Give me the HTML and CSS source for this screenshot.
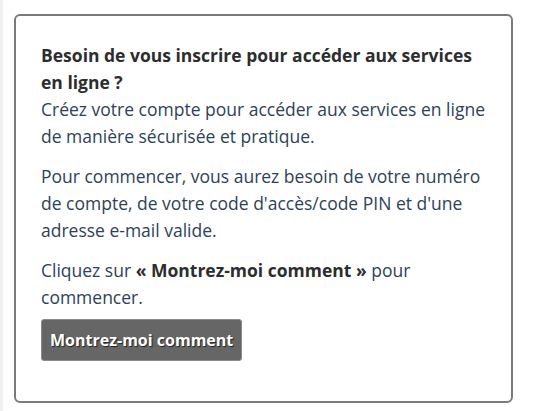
FILE: index.html
```html
<!DOCTYPE html>
<html lang="fr">
<head>
<meta charset="utf-8">
<title>Inscription</title>
<link rel="stylesheet" href="styles.css">
</head>
<body>
<div class="page">
  <section class="card">
    <h2 class="card-title">Besoin de vous inscrire pour accéder aux services en ligne ?</h2>
    <p class="card-text">Créez votre compte pour accéder aux services en ligne de manière sécurisée et pratique.</p>
    <p class="card-text">Pour commencer, vous aurez besoin de votre numéro de compte, de votre code d'accès/code PIN et d'une adresse e-mail valide.</p>
    <p class="card-text card-text-last">Cliquez sur <strong class="strong">« Montrez-moi comment »</strong> pour commencer.</p>
    <button class="btn" type="button">Montrez-moi comment</button>
  </section>
</div>
</body>
</html>
```

FILE: styles.css
```css
html, body {
  margin: 0;
  padding: 0;
  background: #fff;
}
body {
  font-family: "Open Sans", "Noto Sans", sans-serif;
  font-size: 17.5px;
  line-height: 27px;
  color: #2e4257;
}
.page {
  border-left: 3px solid #f1f1f1;
  padding: 14px 25px 7px 11px;
  min-height: 390px;
}
.card {
  border: 2px solid #7a7a7a;
  border-radius: 6px;
  padding: 26px 24px 40px 25px;
}
.card-title {
  margin: 0;
  font-size: 17.5px;
  font-weight: 700;
  line-height: 27px;
  color: #2d2d2d;
}
.card-text {
  margin: 0 0 13px 0;
}
.card-text-last {
  margin-bottom: 0;
}
.strong {
  font-weight: 700;
  color: #2d2d2d;
}
.btn {
  display: block;
  margin-top: 8px;
  font-family: "Open Sans", "Noto Sans", sans-serif;
  font-size: 16px;
  font-weight: 700;
  line-height: 24px;
  color: #fff;
  text-shadow: 1px 1px 1px #222;
  background: #666;
  border: 1px solid #8a8a8a;
  border-radius: 3px;
  padding: 8px 8px 8px 8px;
  cursor: pointer;
}
```
